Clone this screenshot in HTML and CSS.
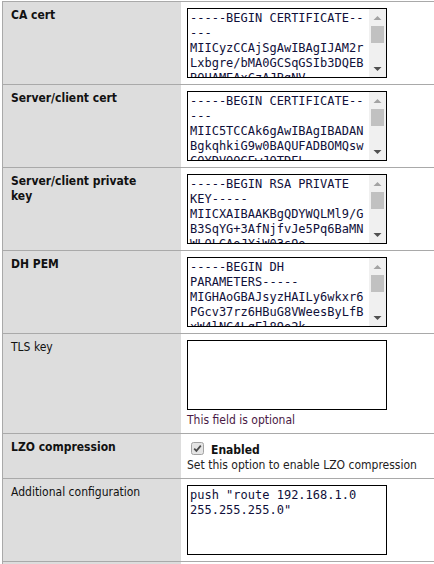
FILE: index.html
```html
<!DOCTYPE html>
<html lang="en">
<head>
<meta charset="utf-8">
<title>OpenVPN settings</title>
<link rel="stylesheet" href="styles.css">
</head>
<body>
<div class="form">
  <div class="row">
    <div class="label strong">CA cert</div>
    <div class="field">
      <div class="scrollbox">
        <textarea class="area cert" spellcheck="false">-----BEGIN CERTIFICATE-----
MIICyzCCAjSgAwIBAgIJAM2rLxbgre/bMA0GCSqGSIb3DQEBBQUAMEAxCzAJBgNV
BAYTAlVTMQswCQYDVQQIEwJDQTERMA8GA1UEBxMIU2FuIEpvc2UxETAPBgNVBAoT
CE9wZW5WUE4wHhcNMTQwMzEyMTk0NTI4WhcNMjQwMzA5MTk0NTI4WjBAMQswCQYD
-----END CERTIFICATE-----</textarea>
        <div class="vbar" aria-hidden="true">
          <div class="vbtn"><svg width="17" height="17" viewBox="0 0 17 17"><path d="M4.5 11 L12.5 11 L8.5 7 Z" fill="#a3a3a3"/></svg></div>
          <div class="track"><div class="thumb"></div></div>
          <div class="vbtn"><svg width="17" height="17" viewBox="0 0 17 17"><path d="M4.5 7 L12.5 7 L8.5 11 Z" fill="#505050"/></svg></div>
        </div>
      </div>
    </div>
  </div>
  <div class="row">
    <div class="label strong">Server/client cert</div>
    <div class="field">
      <div class="scrollbox">
        <textarea class="area cert" spellcheck="false">-----BEGIN CERTIFICATE-----
MIIC5TCCAk6gAwIBAgIBADANBgkqhkiG9w0BAQUFADBOMQswCQYDVQQGEwJOTDEL
MAkGA1UECBMCTkgxEjAQBgNVBAcTCUFtc3RlcmRhbTEcMBoGA1UEChMTT3BlblZQ
-----END CERTIFICATE-----</textarea>
        <div class="vbar" aria-hidden="true">
          <div class="vbtn"><svg width="17" height="17" viewBox="0 0 17 17"><path d="M4.5 11 L12.5 11 L8.5 7 Z" fill="#a3a3a3"/></svg></div>
          <div class="track"><div class="thumb"></div></div>
          <div class="vbtn"><svg width="17" height="17" viewBox="0 0 17 17"><path d="M4.5 7 L12.5 7 L8.5 11 Z" fill="#505050"/></svg></div>
        </div>
      </div>
    </div>
  </div>
  <div class="row">
    <div class="label strong">Server/client private key</div>
    <div class="field">
      <div class="scrollbox">
        <textarea class="area cert" spellcheck="false">-----BEGIN RSA PRIVATE
KEY-----
MIICXAIBAAKBgQDYWQLMl9/GB3SqYG+3AfNjfvJe5Pq6BaMNWLQLGAoJXiW03s9o
Hk2T3ZyVcF8mQp4Lr0dAaXb7eT1uYwK9sNq2vR6oJf3hCzD5iPmLgE8tBxUaWnQy
-----END RSA PRIVATE KEY-----</textarea>
        <div class="vbar" aria-hidden="true">
          <div class="vbtn"><svg width="17" height="17" viewBox="0 0 17 17"><path d="M4.5 11 L12.5 11 L8.5 7 Z" fill="#a3a3a3"/></svg></div>
          <div class="track"><div class="thumb"></div></div>
          <div class="vbtn"><svg width="17" height="17" viewBox="0 0 17 17"><path d="M4.5 7 L12.5 7 L8.5 11 Z" fill="#505050"/></svg></div>
        </div>
      </div>
    </div>
  </div>
  <div class="row">
    <div class="label strong">DH PEM</div>
    <div class="field">
      <div class="scrollbox">
        <textarea class="area cert" spellcheck="false">-----BEGIN DH
PARAMETERS-----
MIGHAoGBAJsyzHAILy6wkxr6PGcv37rz6HBuG8VWeesByLfBxW4lNC4LqEl89o2k
Tq5rH0vZcY7mWb3aJd8sLx1eF6gNuP2iRk9tQwE4oVyB5nCzMhSa0XpDfG3lU7qA
-----END DH PARAMETERS-----</textarea>
        <div class="vbar" aria-hidden="true">
          <div class="vbtn"><svg width="17" height="17" viewBox="0 0 17 17"><path d="M4.5 11 L12.5 11 L8.5 7 Z" fill="#a3a3a3"/></svg></div>
          <div class="track"><div class="thumb"></div></div>
          <div class="vbtn"><svg width="17" height="17" viewBox="0 0 17 17"><path d="M4.5 7 L12.5 7 L8.5 11 Z" fill="#505050"/></svg></div>
        </div>
      </div>
    </div>
  </div>
  <div class="row">
    <div class="label">TLS key</div>
    <div class="field">
      <textarea class="area plain" spellcheck="false"></textarea>
      <div class="hint optional">This field is optional</div>
    </div>
  </div>
  <div class="row">
    <div class="label strong">LZO compression</div>
    <div class="field">
      <label class="check-line">
        <svg class="checkbox" width="13" height="13" viewBox="0 0 13 13" aria-hidden="true">
          <rect x="0.5" y="0.5" width="12" height="12" rx="2" fill="#e4e4e4" stroke="#a2a2a2"/>
          <path d="M3.2 6.6 L5.4 8.9 L9.8 3.6" fill="none" stroke="#4a4a4a" stroke-width="1.7"/>
        </svg>
        <span class="check-text">Enabled</span>
      </label>
      <div class="hint">Set this option to enable LZO compression</div>
    </div>
  </div>
  <div class="row">
    <div class="label">Additional configuration</div>
    <div class="field">
      <textarea class="area plain" spellcheck="false">push "route 192.168.1.0 255.255.255.0"</textarea>
    </div>
  </div>
  <div class="row last">
    <div class="label"></div>
    <div class="field"></div>
  </div>
</div>
</body>
</html>
```
FILE: styles.css
```css
html, body {
  margin: 0;
  padding: 0;
  overflow: hidden;
  background: #ffffff;
}

.form {
  margin: 1px 0 0 2px;
  border-left: 1px solid #a9a9a9;
  font-family: "DejaVu Sans Condensed", "DejaVu Sans", sans-serif;
  font-stretch: condensed;
  font-size: 12px;
  color: #111111;
}

.row {
  display: flex;
  border-top: 1px solid #a9a9a9;
}

.label {
  flex: 0 0 178px;
  box-sizing: border-box;
  background: #dddddd;
  padding: 6px 24px 6px 8px;
  line-height: 15px;
}

.strong {
  font-weight: bold;
}

.field {
  flex: 1;
  padding: 6px 6px 5px 6px;
  min-width: 0;
}

.last .label,
.last .field {
  height: 2px;
  padding: 0;
}

/* textarea with a classic scrollbar beside it */
.scrollbox {
  display: flex;
  box-sizing: border-box;
  width: 200px;
  height: 70px;
  margin-bottom: 1px;
  border: 1px solid #000000;
  background: #ffffff;
}

.area {
  display: block;
  box-sizing: border-box;
  margin: 0;
  padding: 2px;
  border: 0;
  border-radius: 0;
  background: #ffffff;
  color: #10103a;
  font-family: "DejaVu Sans Mono", "Liberation Mono", monospace;
  font-size: 12px;
  line-height: 15px;
  resize: none;
  outline: none;
  overflow: hidden;
}

.cert {
  flex: 1;
  min-width: 0;
  height: 68px;
  word-break: break-all;
}

.plain {
  width: 200px;
  height: 70px;
  margin-bottom: 1px;
  border: 1px solid #000000;
}

.vbar {
  display: flex;
  flex-direction: column;
  flex: 0 0 17px;
  background: #f0f0f0;
}

.vbtn {
  height: 17px;
}

.vbtn svg {
  display: block;
}

.track {
  flex: 1;
  padding: 0 2px;
}

.thumb {
  height: 17px;
  background: #c1c1c1;
}

.hint {
  margin-top: 2px;
  line-height: 16px;
  color: #222222;
}

.optional {
  color: #4a1a45;
}

.check-line {
  display: flex;
  align-items: flex-start;
  height: 18px;
}

.checkbox {
  display: block;
  margin: 2px 0 0 4px;
}

.check-text {
  margin-left: 7px;
  padding-top: 2px;
  font-weight: bold;
  line-height: 16px;
}

.check-line + .hint {
  margin-top: 0;
  line-height: 15px;
}
```
